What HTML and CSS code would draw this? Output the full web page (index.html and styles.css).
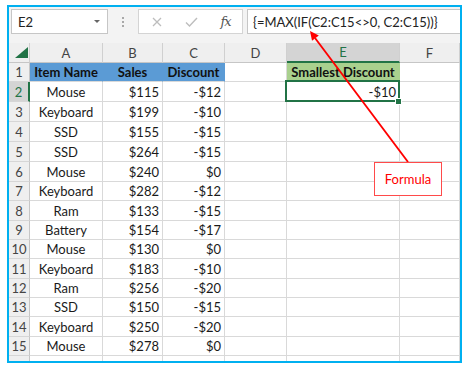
FILE: index.html
```html
<!DOCTYPE html>
<html>
<head>
<meta charset="utf-8">
<link rel="stylesheet" href="styles.css">
</head>
<body>
<div class="frame">
  <div class="toolbar">
    <div class="namebox"><span>E2</span><span class="caret"></span></div>
    <div class="grip"><i></i><i></i><i></i></div>
    <div class="fbuttons">
      <span class="fb"><svg width="10" height="10" viewBox="0 0 10 10"><path d="M1 1 L9 9 M9 1 L1 9" stroke="#bdbdbd" stroke-width="1.3" fill="none"/></svg></span>
      <span class="fb"><svg width="13" height="10" viewBox="0 0 13 10"><path d="M1 5.5 L4.5 9 L12 1" stroke="#bdbdbd" stroke-width="1.4" fill="none"/></svg></span>
      <span class="fb fx">fx</span>
    </div>
    <div class="formula">{=MAX(IF(C2:C15&lt;&gt;0, C2:C15))}</div>
  </div>
  <div class="sheet">
    <div class="c hd corner"><svg width="13" height="11" viewBox="0 0 13 11"><polygon points="13,0 13,11 0,11" fill="#217346"/></svg></div>
    <div class="c hd">A</div>
    <div class="c hd">B</div>
    <div class="c hd">C</div>
    <div class="c hd">D</div>
    <div class="c hd hd-sel">E</div>
    <div class="c hd">F</div>

    <div class="c rh">1</div>
    <div class="c ctr b blue">Item Name</div>
    <div class="c ctr b blue">Sales</div>
    <div class="c ctr b blue">Discount</div>
    <div class="c"></div>
    <div class="c ctr b green">Smallest Discount</div>
    <div class="c"></div>

    <div class="c rh rh-sel">2</div>
    <div class="c ctr">Mouse</div>
    <div class="c r">$115</div>
    <div class="c r">-$12</div>
    <div class="c"></div>
    <div class="c r selcell">-$10<span class="sel"></span><span class="handle"></span></div>
    <div class="c"></div>

    <div class="c rh">3</div>
    <div class="c ctr">Keyboard</div>
    <div class="c r">$199</div>
    <div class="c r">-$10</div>
    <div class="c"></div><div class="c"></div><div class="c"></div>

    <div class="c rh">4</div>
    <div class="c ctr">SSD</div>
    <div class="c r">$155</div>
    <div class="c r">-$15</div>
    <div class="c"></div><div class="c"></div><div class="c"></div>

    <div class="c rh">5</div>
    <div class="c ctr">SSD</div>
    <div class="c r">$264</div>
    <div class="c r">-$15</div>
    <div class="c"></div><div class="c"></div><div class="c"></div>

    <div class="c rh">6</div>
    <div class="c ctr">Mouse</div>
    <div class="c r">$240</div>
    <div class="c r">$0</div>
    <div class="c"></div><div class="c"></div><div class="c"></div>

    <div class="c rh">7</div>
    <div class="c ctr">Keyboard</div>
    <div class="c r">$282</div>
    <div class="c r">-$12</div>
    <div class="c"></div><div class="c"></div><div class="c"></div>

    <div class="c rh">8</div>
    <div class="c ctr">Ram</div>
    <div class="c r">$133</div>
    <div class="c r">-$15</div>
    <div class="c"></div><div class="c"></div><div class="c"></div>

    <div class="c rh">9</div>
    <div class="c ctr">Battery</div>
    <div class="c r">$154</div>
    <div class="c r">-$17</div>
    <div class="c"></div><div class="c"></div><div class="c"></div>

    <div class="c rh">10</div>
    <div class="c ctr">Mouse</div>
    <div class="c r">$130</div>
    <div class="c r">$0</div>
    <div class="c"></div><div class="c"></div><div class="c"></div>

    <div class="c rh">11</div>
    <div class="c ctr">Keyboard</div>
    <div class="c r">$183</div>
    <div class="c r">-$10</div>
    <div class="c"></div><div class="c"></div><div class="c"></div>

    <div class="c rh">12</div>
    <div class="c ctr">Ram</div>
    <div class="c r">$256</div>
    <div class="c r">-$20</div>
    <div class="c"></div><div class="c"></div><div class="c"></div>

    <div class="c rh">13</div>
    <div class="c ctr">SSD</div>
    <div class="c r">$150</div>
    <div class="c r">-$15</div>
    <div class="c"></div><div class="c"></div><div class="c"></div>

    <div class="c rh">14</div>
    <div class="c ctr">Keyboard</div>
    <div class="c r">$250</div>
    <div class="c r">-$20</div>
    <div class="c"></div><div class="c"></div><div class="c"></div>

    <div class="c rh">15</div>
    <div class="c ctr">Mouse</div>
    <div class="c r">$278</div>
    <div class="c r">$0</div>
    <div class="c"></div><div class="c"></div><div class="c"></div>

    <div class="c rh"></div>
    <div class="c"></div><div class="c"></div><div class="c"></div>
    <div class="c"></div><div class="c"></div><div class="c"></div>
  </div>
</div>
<svg class="arrow" width="470" height="370" viewBox="0 0 470 370">
  <line x1="408" y1="162" x2="315" y2="38" stroke="#ff0000" stroke-width="1.8"/>
  <polygon points="310,31 318.8,35.6 312,40.8" fill="#ff0000"/>
</svg>
<div class="callout">Formula</div>
</body>
</html>
```
FILE: styles.css
```css
html, body {
  margin: 0;
  padding: 0;
  background: #fff;
}
body {
  position: relative;
  width: 470px;
  height: 370px;
  box-sizing: border-box;
  padding: 5px 0 0 7px;
  overflow: hidden;
  font-family: Lato, "Open Sans", sans-serif;
  color: #1a1a1a;
}
.frame {
  width: 455px;
  height: 358px;
  box-sizing: border-box;
  border: 2px solid #00b0f0;
  overflow: hidden;
  background: #fff;
}
.toolbar {
  height: 36px;
  box-sizing: border-box;
  background: #f3f3f3;
  display: flex;
  align-items: flex-start;
  padding: 2px 0 0 2px;
}
.namebox {
  width: 97px;
  height: 25px;
  box-sizing: border-box;
  border: 1px solid #c6c6c6;
  background: #fff;
  display: flex;
  align-items: center;
  justify-content: space-between;
  padding: 0 7px 0 6px;
  font-size: 13px;
  color: #222;
}
.caret {
  width: 0;
  height: 0;
  border-left: 3px solid transparent;
  border-right: 3px solid transparent;
  border-top: 3px solid #666;
}
.grip {
  width: 30px;
  height: 25px;
  display: flex;
  flex-direction: column;
  align-items: center;
  justify-content: center;
  gap: 2px;
}
.grip i {
  display: block;
  width: 2px;
  height: 2px;
  background: #a8a8a8;
}
.fbuttons {
  width: 105px;
  height: 25px;
  box-sizing: border-box;
  border: 1px solid #d4d4d4;
  background: #fff;
  display: grid;
  grid-template-columns: 35px 35px 33px;
  align-items: center;
}
.fb {
  display: flex;
  justify-content: center;
  align-items: center;
}
.fx {
  font-family: "DejaVu Serif", "Liberation Serif", serif;
  font-style: italic;
  font-size: 13px;
  color: #555;
  letter-spacing: -1px;
}
.formula {
  flex: 1;
  margin-left: 4px;
  height: 25px;
  box-sizing: border-box;
  border: 1px solid #c6c6c6;
  border-right: none;
  background: #fff;
  padding-left: 5px;
  display: flex;
  align-items: center;
  font-size: 13px;
  color: #222;
  white-space: nowrap;
}
.sheet {
  display: grid;
  grid-template-columns: 21px 73px 60px 62px 62px 113px 60px;
  grid-template-rows: 20px 19px 20px 20px 20px 20px 20px 19px 20px 19px 19px 20px 19px 19px 20px 19px 20px;
}
.c {
  box-sizing: border-box;
  border-right: 1px solid #d9d9d9;
  border-bottom: 1px solid #d9d9d9;
  display: flex;
  align-items: center;
  padding: 0 3px;
  font-size: 13px;
  white-space: nowrap;
  overflow: hidden;
}
.hd {
  background: #efefef;
  justify-content: center;
  color: #444;
  border-right-color: #d0d0d0;
  border-bottom-color: #c6c6c6;
}
.corner {
  justify-content: flex-end;
  align-items: flex-end;
  padding: 0 1px 4px 0;
}
.hd-sel {
  background: #d4d4d4;
  color: #217346;
  border-bottom: 2px solid #217346;
}
.rh {
  background: #efefef;
  justify-content: center;
  color: #444;
  padding: 0;
  border-right-color: #c6c6c6;
  border-bottom-color: #d6d6d6;
}
.rh-sel {
  background: #d4d4d4;
  color: #217346;
  border-right: 2px solid #217346;
}
.ctr {
  justify-content: center;
}
.r {
  justify-content: flex-end;
}
.b {
  font-weight: bold;
  color: #111;
}
.blue {
  background: #5b9bd5;
  border-right-color: #5b9bd5;
}
.green {
  background: #a9d08e;
  border-right-color: #a9d08e;
}
.selcell {
  position: relative;
  overflow: visible;
}
.sel {
  position: absolute;
  left: -2px;
  top: -2px;
  right: -1px;
  bottom: -1px;
  border: 2px solid #217346;
}
.handle {
  position: absolute;
  right: -3px;
  bottom: -4px;
  width: 5px;
  height: 5px;
  background: #217346;
  border: 1px solid #fff;
}
.arrow {
  position: absolute;
  left: 0;
  top: 0;
  pointer-events: none;
}
.callout {
  position: absolute;
  left: 374px;
  top: 162px;
  width: 68px;
  height: 34px;
  box-sizing: border-box;
  border: 1.5px solid #ff4a4a;
  background: #fff;
  display: flex;
  align-items: center;
  justify-content: center;
  color: #ff0000;
  font-size: 13px;
}
```
